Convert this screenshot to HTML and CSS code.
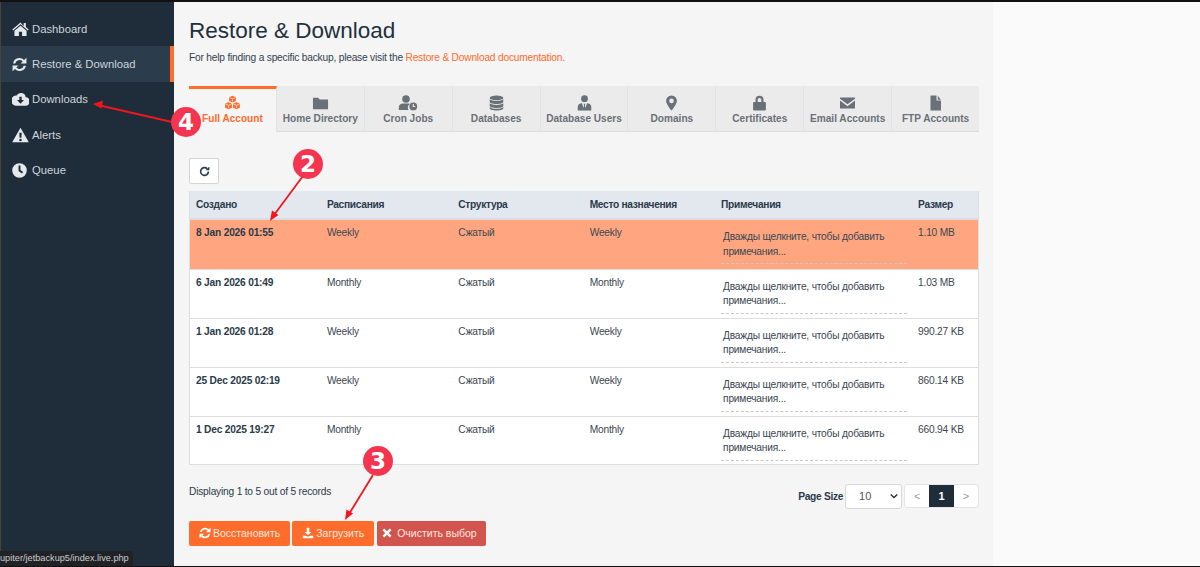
FILE: index.html
```html
<!DOCTYPE html>
<html lang="ru">
<head>
<meta charset="utf-8">
<title>Restore &amp; Download</title>
<link rel="stylesheet" href="styles.css">
</head>
<body>
<svg width="0" height="0" class="defs">
  <defs>
    <symbol id="i-refresh" viewBox="0 0 16 16"><path d="M1.200 6.800A6.900 6.900 0 0 1 12.900 3.100L15.400.8V7H9.200L11.400 4.700A4.700 4.700 0 0 0 3.500 6.800ZM14.800 9.200A6.900 6.900 0 0 1 3.100 12.900L.6 15.200V9H6.800L4.600 11.300A4.700 4.700 0 0 0 12.500 9.200Z"/></symbol>
  </defs>
</svg>
<div class="app">
  <nav class="sidebar">
    <a class="nav-item"><svg class="nav-icon" viewBox="0 0 16 14" preserveAspectRatio="xMinYMid"><path d="M8 .8 .3 7.400l.8 1L8 2.600l6.900 5.800.8-1-2.700-2.300V1.300h-2v3.100L8 .8zM8 4 2.300 8.700V13.500h4.200V9.700h3v3.800h4.200V8.700L8 4z"/></svg><span>Dashboard</span></a>
    <a class="nav-item active"><svg class="nav-icon sm"><use href="#i-refresh"/></svg><span>Restore &amp; Download</span></a>
    <a class="nav-item"><svg class="nav-icon" viewBox="0 0 16 13" preserveAspectRatio="xMinYMid"><path fill-rule="evenodd" d="M12.900 4.800A4.600 4.600 0 0 0 4.300 3.300 3.800 3.800 0 0 0 3.700 12.800h9a3.500 3.500 0 0 0 .2-8zM8 11 4.700 7.400h2.200V4.400h2.200v3h2.200L8 11z"/></svg><span>Downloads</span></a>
    <a class="nav-item"><svg class="nav-icon" viewBox="0 0 16 14" preserveAspectRatio="xMinYMid"><path d="M8 .2.200 13.800h15.600L8 .2zM6.900 4.800h2.200l-.2 4.800H7.100L6.900 4.800zm1.100 5.700a1.200 1.200 0 1 1 0 2.400 1.200 1.200 0 0 1 0-2.400z" fill-rule="evenodd"/></svg><span>Alerts</span></a>
    <a class="nav-item"><svg class="nav-icon sm" viewBox="1 1 14 14"><path d="M8 1.200a6.800 6.800 0 1 0 0 13.600A6.800 6.800 0 0 0 8 1.200zM7.100 3.400h1.800v4.200l2.500 1.900-1.100 1.400-3.200-2.500V3.400z" fill-rule="evenodd"/></svg><span>Queue</span></a>
  </nav>

  <main class="content">
    <h1 class="title">Restore &amp; Download</h1>
    <p class="help">For help finding a specific backup, please visit the <a class="help-link">Restore &amp; Download documentation.</a></p>

    <div class="tabs">
      <a class="tab active"><svg class="tab-icon" viewBox="0 0 18 16"><path d="M9 .3 12.600 1.800V6L9 7.600 5.400 6V1.800zM4.800 7.200 8.400 8.700V12.900L4.800 14.500 1.200 12.900V8.700zM13.200 7.200 16.800 8.700V12.900L13.200 14.500 9.600 12.900V8.700z"/><path class="cube-line" d="M5.800 2.200 9 3.600l3.200-1.400M9 3.600V6.500M1.600 9.100l3.200 1.400 3.200-1.400M4.800 10.500v3M10 9.100l3.200 1.400 3.200-1.400M13.200 10.500v3"/></svg><span>Full Account</span></a>
      <a class="tab"><svg class="tab-icon" viewBox="0 0 18 16"><path d="M1 2.500h5.500L8.200 4.200H17V14.500H1z"/></svg><span>Home Directory</span></a>
      <a class="tab"><svg class="tab-icon wide" viewBox="0 0 20 16"><circle cx="8" cy="4" r="3.800"/><path d="M.8 15v-2.500C.8 10 3 8.600 5 8.600h5c.6 0 1.200.1 1.700.3A5 5 0 0 0 10.500 15H.8z"/><path d="M15.300 7.500a3.900 3.900 0 1 0 0 7.800 3.900 3.900 0 0 0 0-7.800zm1.900 4.500h-2.500V9h1.100v2h1.400v1z" fill-rule="evenodd"/></svg><span>Cron Jobs</span></a>
      <a class="tab"><svg class="tab-icon" viewBox="0 0 16 16"><ellipse cx="8" cy="2.900" rx="6.800" ry="2.400"/><path d="M1.200 4.300C2.500 5.600 5 6 8 6s5.500-.4 6.800-1.700v2.400C14.800 8 11.800 9 8 9S1.200 8 1.200 6.700zM1.200 8.300C2.500 9.600 5 10 8 10s5.500-.4 6.800-1.700v2.400C14.800 12 11.800 13 8 13s-6.800-1-6.800-2.300zM1.200 11.900C2.500 13.200 5 13.700 8 13.700s5.500-.5 6.800-1.800v1.300c0 1.300-3 2.300-6.800 2.300s-6.800-1-6.800-2.300z"/></svg><span>Databases</span></a>
      <a class="tab"><svg class="tab-icon" viewBox="0 0 16 16"><circle cx="8" cy="3.700" r="3.400"/><path d="M1.200 15.500v-3.300C1.200 9.800 3 8.200 5.500 8.200L7 13l.6-3-.5-1.300h1.800L8.400 10l.6 3 1.500-4.800c2.500 0 4.300 1.600 4.300 4v3.300z"/></svg><span>Database Users</span></a>
      <a class="tab"><svg class="tab-icon" viewBox="0 0 12 16"><path d="M6 .4A5.400 5.400 0 0 0 .6 5.800C.6 9 4.400 13.600 6 15.600c1.600-2 5.400-6.600 5.400-9.800A5.400 5.400 0 0 0 6 .4zm0 3.200a2.300 2.300 0 1 1 0 4.600 2.300 2.300 0 0 1 0-4.600z" fill-rule="evenodd"/></svg><span>Domains</span></a>
      <a class="tab"><svg class="tab-icon" viewBox="0 0 14 16"><path d="M3 7V4.700a4 4 0 0 1 8 0V7h1.500c.5 0 .9.400.9.900v6.700c0 .5-.4.900-.9.900h-11a.9.900 0 0 1-.9-.9V7.900c0-.5.400-.9.900-.9H3zm2.200 0h3.600V4.700a1.800 1.800 0 0 0-3.600 0V7z" fill-rule="evenodd"/></svg><span>Certificates</span></a>
      <a class="tab"><svg class="tab-icon" viewBox="0 0 17 16"><path d="M1 2.500h15v1.200L8.500 9.300 1 3.700zM1 5.600l7.500 5.600L16 5.600v8H1z"/></svg><span>Email Accounts</span></a>
      <a class="tab"><svg class="tab-icon" viewBox="0 0 14 16"><path d="M2 .6h6v5h4.500v9.800H2zM9.300.8l3 3.900h-3z"/></svg><span>FTP Accounts</span></a>
    </div>

    <button class="reload" type="button" aria-label="Reload"><svg viewBox="0 0 16 16"><path d="M12.800 8a4.800 4.800 0 1 1-1.500-3.500" fill="none" stroke="currentColor" stroke-width="2"/><path d="M14 1.800v4.700H9.300z"/></svg></button>

    <table class="records">
      <colgroup><col class="c1"><col class="c2"><col class="c3"><col class="c4"><col class="c5"><col class="c6"></colgroup>
      <thead>
        <tr><th>Создано</th><th>Расписания</th><th>Структура</th><th>Место назначения</th><th>Примечания</th><th>Размер</th></tr>
      </thead>
      <tbody>
        <tr class="selected"><td class="date">8 Jan 2026 01:55</td><td>Weekly</td><td>Сжатый</td><td>Weekly</td><td><div class="note">Дважды щелкните, чтобы добавить примечания...</div></td><td>1.10 MB</td></tr>
        <tr><td class="date">6 Jan 2026 01:49</td><td>Monthly</td><td>Сжатый</td><td>Monthly</td><td><div class="note">Дважды щелкните, чтобы добавить примечания...</div></td><td>1.03 MB</td></tr>
        <tr><td class="date">1 Jan 2026 01:28</td><td>Weekly</td><td>Сжатый</td><td>Weekly</td><td><div class="note">Дважды щелкните, чтобы добавить примечания...</div></td><td>990.27 KB</td></tr>
        <tr><td class="date">25 Dec 2025 02:19</td><td>Weekly</td><td>Сжатый</td><td>Weekly</td><td><div class="note">Дважды щелкните, чтобы добавить примечания...</div></td><td>860.14 KB</td></tr>
        <tr class="last"><td class="date">1 Dec 2025 19:27</td><td>Monthly</td><td>Сжатый</td><td>Monthly</td><td><div class="note">Дважды щелкните, чтобы добавить примечания...</div></td><td>660.94 KB</td></tr>
      </tbody>
    </table>

    <div class="pager-row">
      <div class="records-info">Displaying 1 to 5 out of 5 records</div>
      <div class="pager">
        <label class="size-label">Page Size</label>
        <div class="size-select"><span>10</span><svg viewBox="0 0 10 6"><path d="M1 1l4 4 4-4" fill="none" stroke="currentColor" stroke-width="1.800"/></svg></div>
        <div class="pages"><span class="page">&lt;</span><span class="page current">1</span><span class="page">&gt;</span></div>
      </div>
    </div>

    <div class="actions">
      <button class="btn orange" type="button"><svg><use href="#i-refresh"/></svg>Восстановить</button>
      <button class="btn orange" type="button"><svg viewBox="0 0 16 16"><path d="M6.300 1h3.400v5.500h2.700L8 11 3.600 6.500h2.700zM1 11.500h4L8 13l3-1.500h4V15H1z"/></svg>Загрузить</button>
      <button class="btn red" type="button"><svg viewBox="0 0 16 16"><path d="M2 4.300 4.300 2 8 5.700 11.700 2 14 4.300 10.300 8 14 11.700 11.700 14 8 10.300 4.300 14 2 11.700 5.700 8z"/></svg>Очистить выбор</button>
    </div>
  </main>
  <div class="side-gutter"></div>
</div>

<svg class="marks" viewBox="0 0 1200 567">
  <g class="arrow">
    <path d="M172 122 100 105.500"/>
    <path class="head" d="M93 104 103 100.500 101.500 108.500z"/>
    <path d="M303 176 274 215"/>
    <path class="head" d="M270 221 272 210.500 278.500 215z"/>
    <path d="M373 475 349 514"/>
    <path class="head" d="M345 520 346.500 509.500 353 513.500z"/>
  </g>
</svg>
<span class="badge b4">4</span>
<span class="badge b2">2</span>
<span class="badge b3">3</span>

<div class="status">upiter/jetbackup5/index.live.php</div>
</body>
</html>
```

FILE: styles.css
```css
* { box-sizing: border-box; }
html, body { margin: 0; padding: 0; height: 100%; overflow: hidden; }
body {
  background: #111;
  font-family: "Liberation Sans", Arial, sans-serif;
  color: #2a3a4a;
  font-size: 10px;
  position: relative;
}
.defs { position: absolute; }
.app { display: flex; height: 564px; margin-top: 2px; }

.sidebar {
  width: 174px;
  flex: none;
  background: #1f2d3a;
  border-left: 1px solid #4a4436;
  padding-top: 9px;
}
.nav-item {
  display: flex;
  align-items: center;
  height: 35.400px;
  padding-left: 11px;
  color: #ced4d9;
  font-size: 11.300px;
}
.nav-item.active {
  background: #2b3c4c;
  border-right: 4px solid #ff6c2c;
}
.nav-icon { width: 17px; height: 16px; margin-right: 3px; fill: #e6e9ec; flex: none; }
.nav-icon.sm { width: 15px; height: 15px; margin-right: 5px; }

.content {
  width: 819px;
  flex: none;
  background: #f5f5f5;
  padding: 15px 14px 0 15px;
}
.title { margin: 0; font-size: 22.500px; font-weight: 400; line-height: 28px; color: #22303d; }
.help { margin: 6px 0 0; font-size: 10.200px; letter-spacing: -.2px; line-height: 14px; color: #33414f; }
.help-link { color: #ff6c2c; }

.tabs { display: flex; height: 46px; margin-top: 21px; background: #ebebeb; }
.tab {
  flex: 1 1 0;
  display: flex;
  flex-direction: column;
  align-items: center;
  padding-top: 9px;
  gap: 2px;
  border-right: 1px solid #e2e2e2;
  border-bottom: 1px solid #dcdcdc;
  color: #6a7077;
  font-size: 10.100px;
  font-weight: 700;
  white-space: nowrap;
}
.tab:last-child { border-right: 0; }
.tab.active {
  background: #f5f5f5;
  color: #ff6c2c;
  border-top: 3px solid #ff6c2c;
  border-bottom: 0;
  padding-top: 6px;
}
.tab-icon { width: 17px; height: 16px; fill: currentColor; flex: none; }
.tab-icon.wide { width: 20px; }
.cube-line { fill: none; stroke: #f5f5f5; stroke-width: .7; }

.reload {
  display: block;
  width: 30px;
  height: 26px;
  margin-top: 26px;
  padding: 0;
  background: #fff;
  border: 1px solid #d4d4d4;
  border-radius: 2px;
  color: #2a3a4a;
}
.reload svg { display: block; width: 13px; height: 13px; margin: 0 auto; fill: currentColor; }

.records {
  width: 790px;
  margin-top: 7px;
  border-collapse: collapse;
  table-layout: fixed;
  background: #fff;
  border: 1px solid #dfdfdf;
  border-top: 0;
}
.c1, .c2, .c3, .c4 { width: 131.400px; }
.c5 { width: 197px; }
.records th {
  height: 28px;
  padding: 0 6px;
  background: #e3e8ef;
  border-bottom: 2px solid #dcdcdc;
  font-size: 10.200px;
  letter-spacing: -.3px;
  font-weight: 700;
  text-align: left;
  color: #2a3a4a;
}
.records td {
  height: 49px;
  padding: 7px 6px 0;
  vertical-align: top;
  border-bottom: 1px solid #dedede;
  font-size: 10.200px;
  letter-spacing: -.2px;
  line-height: 12px;
  color: #3a4652;
}
.records .selected td { height: 50px; background: #ffa680; }
.records .last td { height: 48px; }
.records td.date { font-weight: 700; color: #2a3a4a; }
.note {
  width: 186px;
  height: 37px;
  padding: 3px 2px 0;
  line-height: 14.600px;
  border-bottom: 1px dashed #c9c9c9;
}

.pager-row { display: flex; justify-content: space-between; margin-top: 19px; height: 25px; }
.records-info { font-size: 10.200px; letter-spacing: -.2px; line-height: 14px; padding-top: 1px; color: #2a3a4a; }
.pager { display: flex; align-items: flex-start; }
.size-label { font-size: 10.200px; letter-spacing: -.3px; font-weight: 700; line-height: 25px; margin-right: 2px; }
.size-select {
  display: flex;
  align-items: center;
  justify-content: space-between;
  width: 57px;
  height: 25px;
  padding: 0 2px 0 13px;
  background: #fff;
  border: 1px solid #d8d8d8;
  border-radius: 3px;
  font-size: 11px;
  color: #555;
  margin-right: 2px;
}
.size-select svg { width: 8px; height: 6px; color: #333; margin-right: 1px; }
.pages { display: flex; height: 24px; background: #fff; border: 1px solid #e5e5e5; border-radius: 3px; }
.page { width: 24.300px; display: flex; align-items: center; justify-content: center; color: #9a9a9a; font-size: 11px; }
.page.current { background: #1f2d3a; color: #fff; font-weight: 700; }

.actions { display: flex; gap: 2px; margin-top: 12px; }
.btn {
  display: flex;
  align-items: center;
  height: 25.500px;
  padding: 0 10px;
  border: 0;
  border-radius: 2px;
  color: #fbe9df;
  font: 10.500px "Liberation Sans", Arial, sans-serif;
}
.btn svg { width: 12px; height: 12px; margin-right: 2px; fill: #fff; flex: none; }
.orange { background: #ff6c2c; }
.red { background: #d2544f; padding: 0 9px 0 4px; margin-left: 1px; }
.red svg { margin-right: 4px; }

.side-gutter { flex: 1; background: #fafafa; }

.marks { position: absolute; left: 0; top: 0; width: 1200px; height: 567px; pointer-events: none; }
.arrow path { stroke: #f2151e; stroke-width: 1.800; fill: none; }
.arrow .head { fill: #f2151e; stroke: none; }
.badge {
  position: absolute;
  width: 30px;
  height: 30px;
  border-radius: 50%;
  background: #f5344f;
  color: #fff;
  font: 700 23px/30px "DejaVu Sans", sans-serif;
  text-align: center;
}
.b4 { left: 171px; top: 107px; }
.b2 { left: 293px; top: 149px; }
.b3 { left: 363px; top: 446px; }

.status {
  position: absolute;
  left: 0;
  bottom: 1px;
  width: 133px;
  height: 15px;
  overflow: hidden;
  background: #202225;
  color: #c9cdd1;
  border-top-right-radius: 3px;
  font-size: 9.200px;
  line-height: 15px;
  white-space: nowrap;
}
```
